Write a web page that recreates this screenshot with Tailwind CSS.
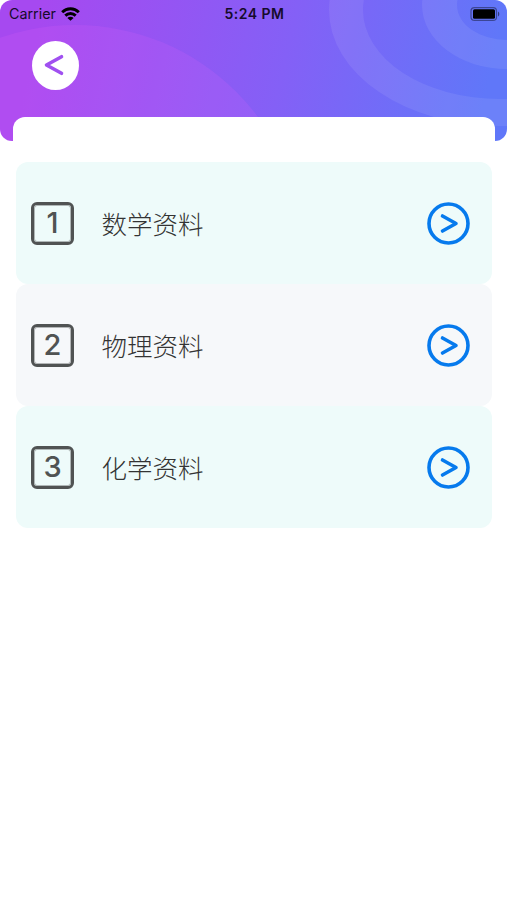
<!DOCTYPE html>
<html lang="zh-CN">
<head>
    <meta charset="UTF-8">
    <meta name="viewport" content="width=device-width, initial-scale=1.0">
    <title>资料</title>
    <script src="https://cdn.jsdelivr.net/npm/@tailwindcss/browser@4"></script>
</head>
<body class="bg-white min-h-screen overflow-hidden font-['Inter','Noto_Sans_CJK_SC',sans-serif]">

<!-- Header -->
<header class="relative h-[141px] rounded-xl overflow-hidden">
    <svg class="absolute inset-0" width="507" height="141" viewBox="0 0 507 141">
        <defs>
            <linearGradient id="bg" gradientUnits="userSpaceOnUse" x1="40" y1="20" x2="480" y2="120">
                <stop offset="0" stop-color="#a649f0"/>
                <stop offset="0.55" stop-color="#8460f6"/>
                <stop offset="1" stop-color="#6077f9"/>
            </linearGradient>
        </defs>
        <rect width="507" height="141" fill="url(#bg)"/>
        <circle cx="75" cy="253" r="228" fill="#fb6fff" fill-opacity="0.12"/>
        <g fill="#fff" fill-opacity="0.08" fill-rule="evenodd">
            <path d="M329 10a171 116 0 1 0 342 0a171 116 0 1 0 -342 0zM363 10a137 89 0 1 0 274 0a137 89 0 1 0 -274 0z"/>
            <path d="M422 5a85 64 0 1 0 170 0a85 64 0 1 0 -170 0zM457 5a50 35 0 1 0 100 0a50 35 0 1 0 -100 0z"/>
        </g>
    </svg>

    <!-- Status bar -->
    <div class="relative grid grid-cols-3 items-center h-[27px] pl-[9px] pr-[7px] text-[#160b2b]">
        <div class="flex items-center gap-[5px] text-[14.3px]">
            <span>Carrier</span>
            <svg width="19" height="14" viewBox="0 0 19 14" fill="none" stroke="#000" stroke-width="2.9">
                <path d="M1.2 5.2C5.8 .6 13.2 .6 17.8 5.2"/>
                <path d="M4.3 8.6C7.2 5.8 11.8 5.8 14.7 8.6"/>
                <path d="M9.5 13.8L6.4 10.9C8 9.5 11 9.5 12.6 10.9z" fill="#000" stroke="none"/>
            </svg>
        </div>
        <span class="text-center text-[14px] font-semibold tracking-[0.5px] whitespace-nowrap">5:24 PM</span>
        <svg class="justify-self-end" width="30" height="14" viewBox="0 0 30 14">
            <rect x="1" y="0.6" width="25.5" height="12.8" rx="3.5" fill="none" stroke="#000" stroke-opacity="0.4" stroke-width="1.2"/>
            <rect x="3" y="2.3" width="22" height="9.4" rx="1.5" fill="#000"/>
            <path d="M28 4.5v5a3 3 0 0 0 0-5z" fill="#000" fill-opacity="0.5"/>
        </svg>
    </div>

    <!-- Back button -->
    <button class="relative block ml-8 mt-[14px]">
        <svg width="47" height="49" viewBox="0 0 47 49">
            <ellipse cx="23.5" cy="24.5" rx="23.5" ry="24.5" fill="#fff"/>
            <path d="M29.5 15.7L14.5 24L29.5 32.3" fill="none" stroke="#a050f0" stroke-width="3.6" stroke-linecap="round" stroke-linejoin="round"/>
        </svg>
    </button>
</header>

<!-- List -->
<main class="relative -mt-6 ml-[13px] mr-3 pt-[45px] px-[3px] bg-white rounded-t-xl">
    <div class="flex items-center h-[122px] pl-[15px] pr-[22px] rounded-xl bg-[#eefbfa]">
        <span class="flex items-center justify-center w-[43px] h-[43px] border-[3.5px] outline-[0.5px] -outline-offset-4 outline-[#505353]/40 border-[#505353] rounded-md text-[29px] font-medium text-[#505353]">1</span>
        <span class="ml-[27.5px] pt-[5px] text-[25.5px] font-light text-[#333]">数学资料</span>
        <svg class="ml-auto" width="43" height="43" viewBox="0 0 43 43" fill="none" stroke="#067aed" stroke-width="3.6" stroke-linecap="round" stroke-linejoin="round">
            <circle cx="21.5" cy="21.5" r="19.5"/>
            <path d="M15.5 14L29 21.5L15.5 29"/>
        </svg>
    </div>
    <div class="flex items-center h-[122px] pl-[15px] pr-[22px] rounded-xl bg-[#f6f8fa]">
        <span class="flex items-center justify-center w-[43px] h-[43px] border-[3.5px] outline-[0.5px] -outline-offset-4 outline-[#505353]/40 border-[#505353] rounded-md text-[29px] font-medium text-[#505353]">2</span>
        <span class="ml-[27.5px] pt-[5px] text-[25.5px] font-light text-[#333]">物理资料</span>
        <svg class="ml-auto" width="43" height="43" viewBox="0 0 43 43" fill="none" stroke="#067aed" stroke-width="3.6" stroke-linecap="round" stroke-linejoin="round">
            <circle cx="21.5" cy="21.5" r="19.5"/>
            <path d="M15.5 14L29 21.5L15.5 29"/>
        </svg>
    </div>
    <div class="flex items-center h-[122px] pl-[15px] pr-[22px] rounded-xl bg-[#eefbfa]">
        <span class="flex items-center justify-center w-[43px] h-[43px] border-[3.5px] outline-[0.5px] -outline-offset-4 outline-[#505353]/40 border-[#505353] rounded-md text-[29px] font-medium text-[#505353]">3</span>
        <span class="ml-[27.5px] pt-[5px] text-[25.5px] font-light text-[#333]">化学资料</span>
        <svg class="ml-auto" width="43" height="43" viewBox="0 0 43 43" fill="none" stroke="#067aed" stroke-width="3.6" stroke-linecap="round" stroke-linejoin="round">
            <circle cx="21.5" cy="21.5" r="19.5"/>
            <path d="M15.5 14L29 21.5L15.5 29"/>
        </svg>
    </div>
</main>
</body>
</html>
